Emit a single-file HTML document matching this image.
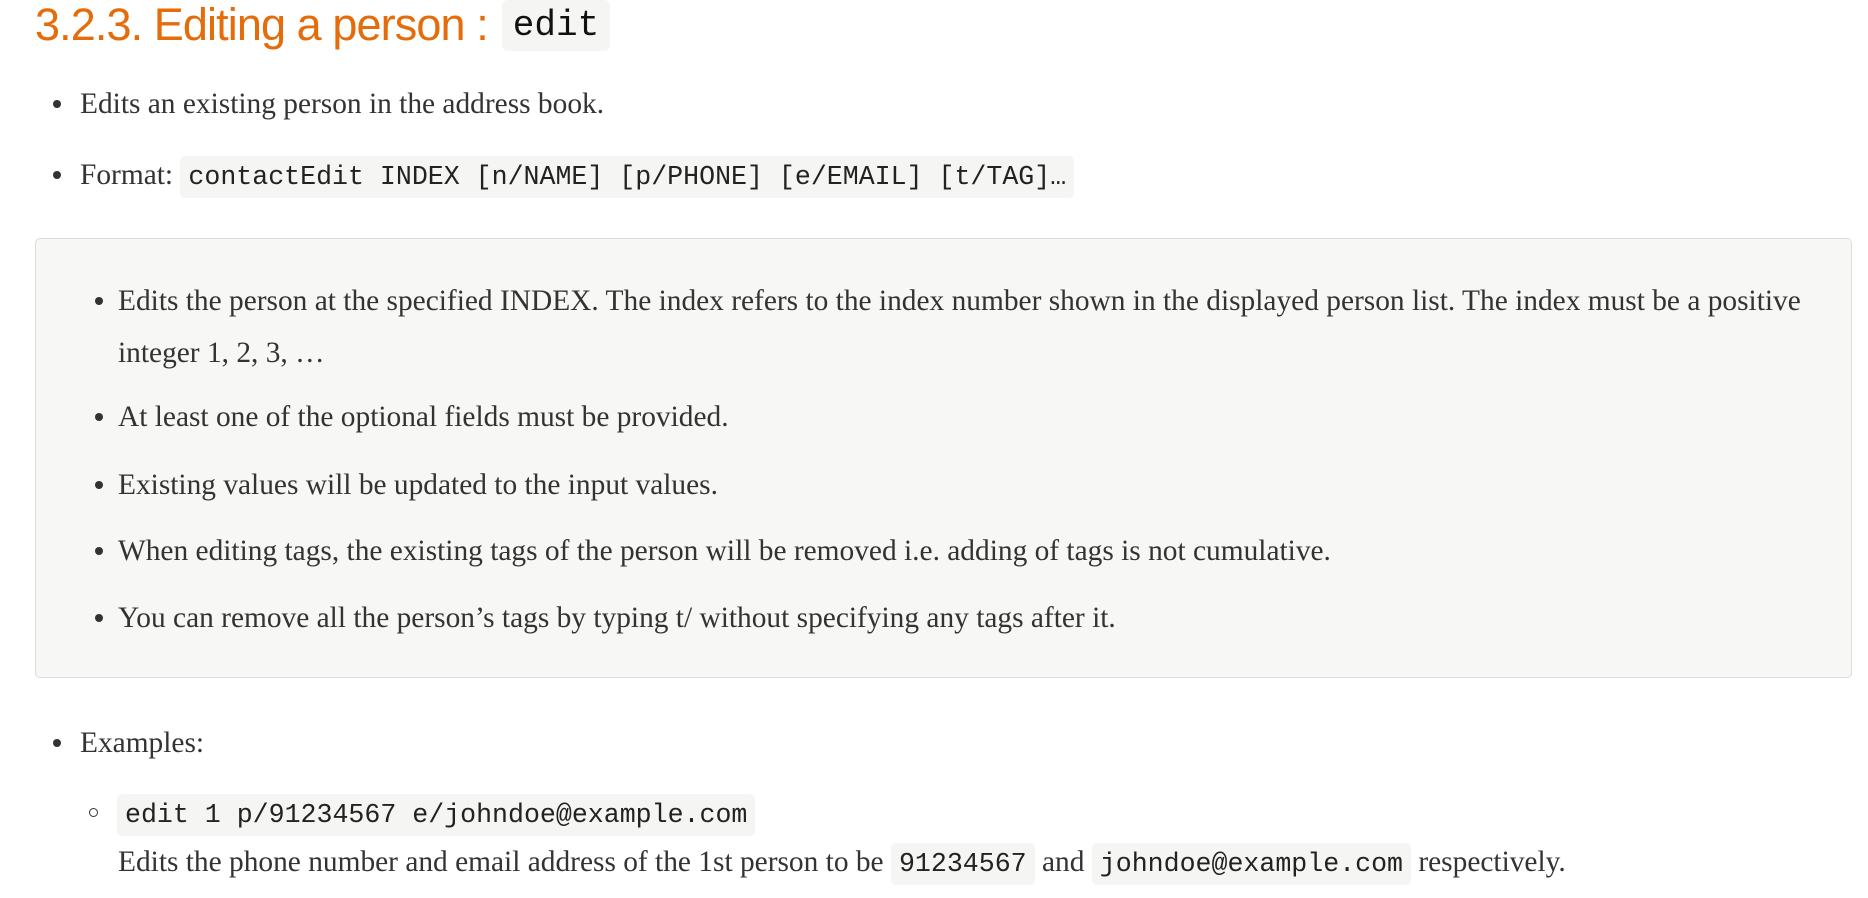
<!DOCTYPE html>
<html><head><meta charset="utf-8"><style>
html,body{margin:0;padding:0;background:#fff;width:1868px;height:898px;overflow:hidden}
body{font-family:"Liberation Serif",serif;color:#333;font-size:29.4px}
.a{position:absolute;white-space:nowrap;line-height:50px;height:50px}
.c{font-family:"Liberation Mono",monospace;font-size:26.6px;background:#f5f5f4;border-radius:5px;padding:6px 8px;color:#222}
.dot{position:absolute;width:8px;height:8px;border-radius:50%;background:#333}
.circ{position:absolute;width:7px;height:7px;border-radius:50%;border:1.5px solid #333}
h1{position:absolute;left:35px;top:-5px;margin:0;font-family:"Liberation Sans",sans-serif;font-weight:normal;font-size:45px;color:#e46c0a;white-space:nowrap;line-height:60px;letter-spacing:-0.9px}
.ed{position:absolute;left:502px;top:0;width:108px;height:51px;background:#f5f5f4;border-radius:6px;font-family:"Liberation Mono",monospace;font-size:36px;color:#111;line-height:51px;text-align:center}
.box{position:absolute;left:35px;top:238px;width:1815px;height:438px;background:#f7f7f5;border:1px solid #dcdcdc;border-radius:5px}
</style></head><body>
<h1>3.2.3. Editing a person :</h1>
<div class="ed">edit</div>

<div class="dot" style="left:53px;top:100px"></div>
<div class="a" style="left:80px;top:79px">Edits an existing person in the address book.</div>

<div class="dot" style="left:53px;top:171px"></div>
<div class="a" style="left:80px;top:150px">Format: <span class="c">contactEdit INDEX [n/NAME] [p/PHONE] [e/EMAIL] [t/TAG]…</span></div>

<div class="box"></div>
<div class="dot" style="left:95px;top:297px"></div>
<div class="a" style="left:118px;top:276px">Edits the person at the specified INDEX. The index refers to the index number shown in the displayed person list. The index must be a positive</div>
<div class="a" style="left:118px;top:328px">integer 1, 2, 3, …</div>
<div class="dot" style="left:95px;top:413px"></div>
<div class="a" style="left:118px;top:392px">At least one of the optional fields must be provided.</div>
<div class="dot" style="left:95px;top:481px"></div>
<div class="a" style="left:118px;top:460px">Existing values will be updated to the input values.</div>
<div class="dot" style="left:95px;top:547px"></div>
<div class="a" style="left:118px;top:526px">When editing tags, the existing tags of the person will be removed i.e. adding of tags is not cumulative.</div>
<div class="dot" style="left:95px;top:614px"></div>
<div class="a" style="left:118px;top:593px">You can remove all the person’s tags by typing t/ without specifying any tags after it.</div>

<div class="dot" style="left:53px;top:739px"></div>
<div class="a" style="left:80px;top:718px">Examples:</div>

<div class="circ" style="left:89px;top:808px"></div>
<div class="a" style="left:117px;top:788px"><span class="c">edit 1 p/91234567 e/johndoe@example.com</span></div>
<div class="a" style="left:118px;top:837px">Edits the phone number and email address of the 1st person to be <span class="c">91234567</span> and <span class="c">johndoe@example.com</span> respectively.</div>
</body></html>
